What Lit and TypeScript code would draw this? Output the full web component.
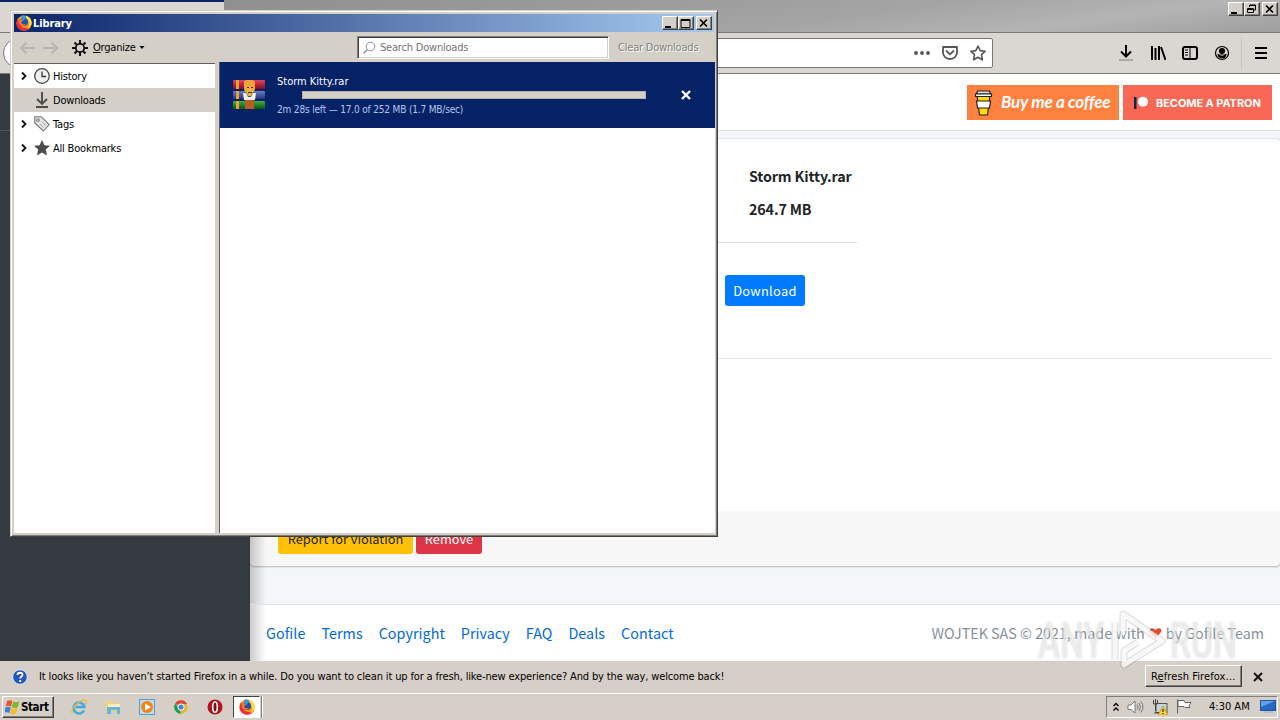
import { LitElement, html, css, svg } from 'lit';
import { customElement } from 'lit/decorators.js';

const shared = css`
    * {
        box-sizing: border-box;
    }

    svg {
        display: block;
        flex: none;
    }

    .ui {
        font-family: "DejaVu Sans Condensed", "DejaVu Sans", sans-serif;
        font-stretch: condensed;
        font-size: 11px;
        letter-spacing: -0.2px;
        line-height: 14px;
        white-space: nowrap;
        color: #000;
    }

    .winbtn {
        width: 16px;
        height: 14px;
        background: #d4d0c8;
        border: 1px solid;
        border-color: #fff #404040 #404040 #fff;
        box-shadow: inset -1px -1px #808080;
    }
`;

const firefox = (size: number) => html`
    <svg width=${size} height=${size} viewBox="0 0 16 16">
        <circle cx="8" cy="8" r="7.600" fill="#ff9500"/>
        <path d="M2 3C-1 8 1 14 6 15.500c4 1 8-.5 9.500-5C13 13 9 14 6.500 12 4 10.500 3 8 4 6z" fill="#f0303c"/>
        <path d="M10 .7c4 1 6.200 4.300 5.600 8.300-.6 3-3 5-5 5 3-2 3-5 2-7-.4-2-3-3-2.600-6.300z" fill="#ffdc3e"/>
        <circle cx="8" cy="7" r="4" fill="#204fb4"/>
        <path d="M5 1c2-1 4.500-.5 5.500 1.500L8 4l1 1-3 1z" fill="#3298e8"/>
        <path d="M2 3l3 2 2 .5-2 2c1 2 3 2 5 1.500C8.500 12 4 11 3 8z" fill="#ff7b16"/>
    </svg>`;

const minimize = svg`<path d="M3 10h6v2H3z"/>`;
const maximize = svg`<path d="M3 3.500h9v8H3zM3 4.500h9" fill="none" stroke="#000"/>`;
const restore = svg`<path d="M5.500 5V3h6v5h-2M5 3.500h7M3.500 6.500h6v4h-6zM3 7.500h7" fill="none" stroke="#000"/>`;
const close = svg`<path d="M4 3.500l7 7M11 3.500l-7 7" fill="none" stroke="#000" stroke-width="1.700"/>`;

const windowButton = (glyph: unknown) => html`
    <div class="winbtn"><svg width="14" height="12" viewBox="1 1 14 12">${glyph}</svg></div>`;

@customElement('library-window')
export class LibraryWindow extends LitElement {
    static styles = [
        shared,
        css`
            :host {
                display: flex;
                flex-direction: column;
                box-sizing: border-box;
                width: 708px;
                height: 527px;
                padding: 2px 2px 3px 3px;
                background: #d4d0c8;
                border: 1px solid;
                border-color: #d4d0c8 #404040 #404040 #d4d0c8;
                box-shadow: inset 1px 1px #fff, inset -1px -1px #808080;
            }

            .title {
                display: flex;
                align-items: center;
                height: 18px;
                margin: 1px 1px 0 0;
                padding: 0 2px;
                background: linear-gradient(to right, #0a246a, #a6caf0);
            }

            .title b {
                flex: 1;
                color: #fff;
                font-family: "DejaVu Sans", sans-serif;
                font-size: 11px;
                letter-spacing: -0.1px;
                padding: 1px 0 0 1px;
            }

            .gap {
                width: 2px;
            }

            .toolbar {
                display: flex;
                align-items: center;
                height: 30px;
                padding: 1px 0 0 5px;
            }

            .gear {
                margin-left: 13px;
            }

            .organize {
                width: 51px;
                padding-left: 5px;
            }

            .search {
                display: flex;
                align-items: center;
                width: 252px;
                height: 23px;
                margin-left: 212px;
                padding-left: 5px;
                gap: 4px;
                color: #757575;
                background: #fff;
                border: 1px solid;
                border-color: #808080 #fff #fff #808080;
                box-shadow: inset 1px 1px #404040, inset -1px -1px #d4d0c8;
            }

            .clear {
                margin-left: 9px;
                color: #808080;
                text-shadow: 1px 1px #fff;
            }

            .panes {
                display: flex;
                flex: 1;
                min-height: 0;
            }

            .tree {
                width: 201px;
                background: #fff;
                border-top: 1px solid #606060;
                margin-top: 1px;
            }

            .row {
                display: flex;
                align-items: center;
                height: 24px;
                padding-left: 6px;
            }

            .row span {
                padding-top: 1px;
            }

            .row svg + svg {
                margin: 0 3px 0 6px;
            }

            .selected {
                background: #d4d0c8;
            }

            .list {
                flex: 1;
                margin-left: 4px;
                background: #fff;
                border-left: 1px solid #606060;
            }

            .item {
                display: flex;
                align-items: center;
                height: 66px;
                padding-left: 13px;
                background: #052266;
            }

            .details {
                width: 369px;
                margin-left: 12px;
                display: flex;
                flex-direction: column;
                padding-top: 1px;
            }

            .details .ui {
                color: #fff;
                letter-spacing: 0;
            }

            .details .status {
                color: #b4c8f0;
                font-size: 10px;
                letter-spacing: -0.17px;
            }

            .bar {
                height: 8px;
                margin: 2px 0 4px 25px;
                border: 1px solid #b5b2ac;
                background: #d4d0c8;
            }

            .cancel {
                margin-left: 35px;
            }
        `
    ];

    twisty = html`<svg width="8" height="10"><path d="M2 1.500l3.500 3.500L2 8.500" fill="none" stroke="#111" stroke-width="1.800"/></svg>`;

    render() {
        return html`
            <div class="title">
                ${firefox(16)}
                <b class="ui">Library</b>
                ${windowButton(minimize)}${windowButton(maximize)}<div class="gap"></div>${windowButton(close)}
            </div>
            <div class="toolbar">
                <svg width="40" height="16" fill="none" stroke="#b9b6b1" stroke-width="2">
                    <path d="M7.500 2.500L2 8l5.500 5.500M2 8h14M32.500 2.500L38 8l-5.500 5.500M38 8H24"/>
                </svg>
                <svg class="gear" width="16" height="16" viewBox="0 0 16 16" fill="none" stroke="#111">
                    <circle cx="8" cy="8" r="4.200" stroke-width="1.800"/>
                    <path d="M8 0v4M8 12v4M0 8h4M12 8h4M2.500 2.500l2.500 2.500M11 11l2.500 2.500M2.500 13.500L5 11M11 5l2.500-2.500" stroke-width="2"/>
                </svg>
                <span class="ui organize"><u>O</u>rganize</span>
                <svg width="6" height="4"><path d="M.5 0h5L3 3z"/></svg>
                <div class="search ui">
                    <svg width="13" height="14" fill="none" stroke="#8d8d98"><circle cx="7.500" cy="5.500" r="4.300"/><path d="M4.500 8.500L.5 12.500" stroke-width="1.500"/></svg>
                    <span>Search Downloads</span>
                </div>
                <span class="ui clear">Clear Downloads</span>
            </div>
            <div class="panes">
                <div class="tree ui">
                    <div class="row">
                        ${this.twisty}
                        <svg width="16" height="16"><circle cx="8" cy="8" r="7.300" fill="#eee" stroke="#444" stroke-width="1.300"/><path d="M8 3.500V8.500h4" fill="none" stroke="#333" stroke-width="1.300"/></svg>
                        <span>History</span>
                    </div>
                    <div class="row selected">
                        <svg width="8" height="10"></svg>
                        <svg width="16" height="16" fill="none" stroke="#4c4c4c" stroke-width="1.900"><path d="M8 0v12M3 7l5 5 5-5M2 15h12"/></svg>
                        <span>Downloads</span>
                    </div>
                    <div class="row">
                        ${this.twisty}
                        <svg width="16" height="16" fill="#e4e4e4" stroke="#777" stroke-width="1.100"><path d="M.8.800h6.500l8 7.700-6 6.500L.8 7z"/><circle cx="4" cy="4" r="1.300" fill="#fff"/><path d="M6 8l3.500 3.500M8 6l3.500 3.500" stroke="#999" stroke-width=".8"/></svg>
                        <span>Tags</span>
                    </div>
                    <div class="row">
                        ${this.twisty}
                        <svg width="16" height="16" fill="#4c4c4c"><path d="M8 0l2.400 5.200 5.600.6-4.200 3.800L13 15.500l-5-3-5 3 1.200-5.900L0 5.800l5.600-.6z"/></svg>
                        <span>All Bookmarks</span>
                    </div>
                </div>
                <div class="list">
                    <div class="item">
                        <svg width="32" height="32" viewBox="0 0 32 32">
                            <defs>
                                <linearGradient id="r" x2="0" y2="1"><stop stop-color="#e4425e"/><stop offset="1" stop-color="#850d25"/></linearGradient>
                                <linearGradient id="b" x2="0" y2="1"><stop stop-color="#667dc6"/><stop offset="1" stop-color="#293276"/></linearGradient>
                                <linearGradient id="g" x2="0" y2="1"><stop stop-color="#3fae42"/><stop offset="1" stop-color="#075515"/></linearGradient>
                            </defs>
                            <rect y="1" width="32" height="9" rx="1" fill="url(#r)"/>
                            <rect y="12" width="32" height="8" rx="1" fill="url(#b)"/>
                            <rect y="22" width="32" height="8" rx="1" fill="url(#g)"/>
                            <path d="M3 1h3v9H3zM3 12h3v8H3zM3 22h3v8H3z" fill="#e9a22d"/>
                            <path d="M12 20h9v10h-9z" fill="#b85d24"/>
                            <path d="M11 2l3-1h6l2 2v7l-1 3h-9l-1-3z" fill="#f3a13b"/>
                            <path d="M10 14h3l2 4h3l2-4h3l-1 7H11z" fill="#f4f0e6"/>
                            <path d="M13 7h7v6l-2 4h-3l-2-4z" fill="#e8b23f"/>
                            <path d="M14 8h2v1h-2zM18 8h2v1h-2zM15 13h4v1h-4z" fill="#54280e"/>
                        </svg>
                        <div class="details">
                            <span class="ui">Storm Kitty.rar</span>
                            <div class="bar"></div>
                            <span class="ui status">2m 28s left — 17.0 of 252 MB (1.7 MB/sec)</span>
                        </div>
                        <svg class="cancel" width="10" height="10"><path d="M1 1l8 8M9 1L1 9" stroke="#fff" stroke-width="2.400"/></svg>
                    </div>
                </div>
            </div>
        `;
    }
}

@customElement('task-bar')
export class TaskBar extends LitElement {
    static styles = [
        shared,
        css`
            :host {
                display: flex;
                align-items: center;
                box-sizing: border-box;
                height: 28px;
                padding: 2px 2px 2px;
                background: #d6cfc7;
                border-top: 1px solid #d6cfc7;
                box-shadow: inset 0 1px #fff;
            }

            .start {
                display: flex;
                align-items: center;
                width: 52px;
                height: 22px;
                padding-left: 2px;
                border: 1px solid;
                border-color: #fff #404040 #404040 #fff;
                box-shadow: inset -1px -1px #808080;
            }

            .start b {
                font-family: "DejaVu Sans", sans-serif;
                font-size: 11.500px;
                letter-spacing: -0.4px;
            }

            .quick {
                display: flex;
                align-items: center;
                gap: 18px;
                margin-left: 17px;
                flex: 1;
            }

            .active {
                display: flex;
                align-items: center;
                width: 27px;
                height: 22px;
                padding-left: 5px;
                margin-left: -8px;
                background: #fff;
                border: 1px solid;
                border-color: #404040 #fff #fff #404040;
                box-shadow: 1px 0 #d6cfc7, 2px 0 #808080, 3px 0 #fff;
            }

            .tray {
                display: flex;
                align-items: center;
                width: 172px;
                height: 22px;
                padding-left: 6px;
                border: 1px solid;
                border-color: #808080 #fff #fff #808080;
            }

            .tray svg + svg {
                margin-left: 8px;
            }

            .time {
                width: 42px;
                margin: 0 9px 0 17px;
                letter-spacing: 0;
            }
        `
    ];

    render() {
        return html`
            <div class="start">
                <svg width="16" height="16">
                    <path d="M2 2c2-1 4-1 5.500 0L6 7.500C4.500 6.500 2.500 6.500.8 7.500z" fill="#e8552a"/>
                    <path d="M8.300 2.500c2 1 4 1 6-.3L12.800 8c-2 1.300-4 1.200-6 0z" fill="#7db928"/>
                    <path d="M.5 8.500c2-1 3.800-1 5.300 0L4.300 14C3 13-.2 13-1 14z" fill="#3d7fe0"/>
                    <path d="M6.500 9c2 1 4 1 6-.3L11 14.500c-2 1.300-4 1.200-6 0z" fill="#f7bc22"/>
                </svg>
                <b class="ui">Start</b>
            </div>
            <div class="quick">
                <svg width="16" height="16" fill="none">
                    <path d="M13 11.500A5.500 5.500 0 1 1 13.500 8H4.500" stroke="#45aae4" stroke-width="2.600"/>
                    <path d="M1.500 14.500C-2 11 10-1 15 1.500c1 .7.500 2.500-.7 4" stroke="#e8b93a" stroke-width="1.300"/>
                </svg>
                <svg width="16" height="16">
                    <path d="M1 2h5l1 2h7v9H1z" fill="#f0d577"/>
                    <path d="M3 5h12v3H3z" fill="#fbf1b8"/>
                    <path d="M2 8h13v7h-3v-4H6v4H2z" fill="#64b4e4"/>
                </svg>
                <svg width="16" height="16">
                    <rect x=".5" y=".5" width="15" height="15" fill="#b8dcf5" stroke="#5a9cd0"/>
                    <circle cx="8" cy="8" r="6" fill="#f58412"/><path d="M6 4.500v7L12 8z" fill="#fff"/>
                </svg>
                <svg width="16" height="16" viewBox="0 0 16 16">
                    <circle cx="8" cy="8" r="6.700" fill="#e2b92c"/>
                    <path d="M8 8L2.200 4.500A6.700 6.700 0 0 1 14 5H8z" fill="#db4437"/>
                    <path d="M2.200 4.500l4 5.500 1.800 4.700A6.700 6.700 0 0 1 2.200 4.500z" fill="#169b5b"/>
                    <circle cx="8" cy="8" r="3.500" fill="#fff"/><circle cx="8" cy="8" r="2.600" fill="#4387ed"/>
                </svg>
                <svg width="16" height="16">
                    <circle cx="8" cy="8" r="7.500" fill="#b5121b"/><ellipse cx="8" cy="8" rx="2.300" ry="5.300" fill="#801010" stroke="#fff" stroke-width="1.600"/>
                </svg>
                <div class="active">${firefox(16)}</div>
            </div>
            <div class="tray">
                <svg width="6" height="10" fill="none" stroke="#000" stroke-width="1.300"><path d="M.5 4L3 1.500 5.500 4M.5 8.500L3 6l2.500 2.500"/></svg>
                <svg width="17" height="14" fill="#fff" stroke="#777"><path d="M1 5h3l4-4v12L4 9.500H1z"/><path d="M10 4.500q2 2.500 0 5M12 3q3 4 0 8M14 1.500q4 5.500 0 11" fill="none"/></svg>
                <svg width="16" height="16">
                    <rect x="4" y="4.500" width="11" height="9" fill="#c8d2dc" stroke="#555"/>
                    <path d="M1.500 1v4h4V1M3.500 0v12M2 14h5" fill="none" stroke="#444"/>
                    <path d="M11 7l5 9H6z" fill="#ffd42a" stroke="#a88400" stroke-width=".6"/><path d="M10.500 10h1v3h-1zM10.500 14h1v1h-1z"/>
                </svg>
                <svg width="16" height="15" fill="#fff" stroke="#666"><path d="M1.500.5v14M2 1.500h6l1 2h6l-2 3 1 2H9l-1-1H2z"/></svg>
                <span class="ui time">4:30 AM</span>
                <svg width="16" height="13"><rect x=".5" y=".5" width="15" height="10" fill="#2969c4" stroke="#24539c"/><path d="M1 1h14L1 7z" fill="#5fa1ea"/><path d="M4 12h9" stroke="#8eb3d8"/></svg>
            </div>
        `;
    }
}

@customElement('app-root')
export class AppRoot extends LitElement {
    static styles = [
        shared,
        css`
            :host {
                display: flex;
                flex-direction: column;
                position: relative;
                width: 1280px;
                height: 720px;
                overflow: hidden;
                background: #d6cfc7;
            }

            .tabs {
                display: flex;
                height: 32px;
                background: linear-gradient(172deg, #888 0%, #a5a5a5 65%, #b4b4b4 82%, #9e9e9e 100%);
            }

            .tab {
                width: 224px;
                background: #dad7d2;
                border-top: 2px solid #0a246a;
            }

            .controls {
                display: flex;
                margin: 2px 2px 0 auto;
            }

            .controls .winbtn:last-child {
                margin-left: 2px;
            }

            .nav {
                display: flex;
                align-items: center;
                height: 42px;
                border: 1px solid #7a7975;
                border-width: 1px 0;
                background: #dad7d3;
            }

            .url {
                display: flex;
                align-items: center;
                justify-content: flex-end;
                width: 990px;
                height: 30px;
                margin-left: 3px;
                padding-right: 6px;
                gap: 12px;
                background: #fff;
                border: 1px solid #777;
                border-radius: 15px 2px 2px 15px;
            }

            .tools {
                display: flex;
                align-items: center;
                gap: 16px;
                margin-left: 125px;
            }

            .sep {
                width: 1px;
                height: 32px;
                margin: 0 -5px 0 -5px;
                background: #c6c3bf;
            }

            .page {
                display: flex;
                height: 587px;
                font-family: "Noto Sans CJK SC", "Noto Sans CJK JP", sans-serif;
                font-size: 14.300px;
                line-height: 24px;
                color: #212529;
                white-space: nowrap;
            }

            .sidebar {
                width: 250px;
                background: #353a41;
            }

            .brand {
                height: 57px;
                border-bottom: 1px solid #4b545c;
            }

            .main {
                width: 1030px;
                display: flex;
                flex-direction: column;
                background: linear-gradient(to right, #0003, #0000 16px), #f4f6f9;
            }

            .header {
                display: flex;
                justify-content: flex-end;
                gap: 4px;
                height: 57px;
                padding: 11px 8px 0;
                background: #fff;
                border-bottom: 1px solid #dee2e6;
            }

            .coffee {
                display: flex;
                align-items: center;
                width: 152px;
                height: 35px;
                padding-left: 7px;
                gap: 8px;
                color: #fff;
                background: #ff813f;
                font: italic 700 17px Lato, sans-serif;
                letter-spacing: -0.25px;
            }

            .coffee span {
                padding-bottom: 2px;
            }

            .patron {
                display: flex;
                align-items: center;
                width: 149px;
                height: 35px;
                padding-left: 11px;
                gap: 8px;
                color: #fff;
                background: #f96854;
                font: 700 11px Inter, sans-serif;
                letter-spacing: -0.07px;
            }

            .card {
                display: flex;
                flex-direction: column;
                height: 428px;
                margin-top: 7px;
                background: linear-gradient(to right, #0003, #0000 16px), #fff;
                border-top: 1px solid #e3e4e8;
                border-radius: 4px;
                box-shadow: 0 1px 2px #0004;
            }

            .facts {
                width: 607px;
                height: 104px;
                padding: 25px 0 0 499px;
                border-bottom: 1px solid #dfdfdf;
                font-weight: 700;
                letter-spacing: -0.14px;
            }

            .facts div {
                height: 33px;
            }

            .action {
                height: 116px;
                margin-right: 8px;
                padding: 32px 0 0 475px;
                border-bottom: 1px solid #e5e5e5;
            }

            .btn {
                display: inline-block;
                height: 31px;
                padding: 0 8px;
                border-radius: 3px;
                line-height: 31px;
                font-size: 12.800px;
                text-align: center;
            }

            .download {
                width: 80px;
                color: #fff;
                background: #007bff;
                letter-spacing: 0.35px;
            }

            .cardfoot {
                display: flex;
                gap: 3px;
                margin-top: auto;
                height: 55px;
                padding: 12px 28px;
                background: #00000008;
            }

            .report {
                width: 135px;
                background: #ffc107;
            }

            .remove {
                width: 66px;
                color: #fff;
                background: #dc3545;
            }

            .footer {
                display: flex;
                gap: 16px;
                margin-top: auto;
                height: 57px;
                padding: 16px;
                color: #0069d9;
                background: linear-gradient(to right, #0003, #0000 16px), #fff;
                border-top: 1px solid #dee2e6;
            }

            .link {
                letter-spacing: 0.06px;
            }

            .credit {
                display: flex;
                gap: 4px;
                margin-left: auto;
                color: #869099;
            }

            .heart {
                margin-top: 6px;
            }

            .notice {
                display: flex;
                align-items: center;
                height: 31px;
                padding: 1px 16px 0 12px;
            }

            .notice .message {
                flex: 1;
                padding-left: 11px;
                letter-spacing: -0.14px;
            }

            .refresh {
                position: relative;
                z-index: 2;
                width: 97px;
                height: 22px;
                margin: -2px 10px 0 0;
                padding: 4px 0 0 5px;
                background: #d6cfc7;
                border: 1px solid;
                border-color: #fff #404040 #404040 #fff;
                box-shadow: inset -1px -1px #808080;
                letter-spacing: 0.1px;
            }

            library-window {
                position: absolute;
                left: 10px;
                top: 10px;
            }

            .watermark {
                position: absolute;
                left: 1038px;
                top: 607px;
                display: flex;
                height: 66px;
            }

            .mark {
                width: 68px;
                color: #fff9;
                font: 500 50px/68px Roboto, sans-serif;
                text-shadow: 0 0 2px #0003;
                transform: scaleX(0.67);
                transform-origin: 0 0;
            }
        `
    ];

    links = ['Gofile', 'Terms', 'Copyright', 'Privacy', 'FAQ', 'Deals', 'Contact'];

    render() {
        return html`
            <div class="tabs">
                <div class="tab"></div>
                <div class="controls">${windowButton(minimize)}${windowButton(restore)}${windowButton(close)}</div>
            </div>
            <div class="nav">
                <div class="url">
                    <svg width="16" height="16" fill="#555"><circle cx="2" cy="8" r="1.900"/><circle cx="8" cy="8" r="1.900"/><circle cx="14" cy="8" r="1.900"/></svg>
                    <svg width="16" height="16" fill="none" stroke="#555" stroke-width="1.800"><path d="M1 2h14v5.500a7 6.500 0 0 1-14 0z" stroke-linejoin="round"/><path d="M4.500 6L8 9.300 11.500 6" stroke-linecap="round"/></svg>
                    <svg width="16" height="16" fill="none" stroke="#555" stroke-width="1.600" stroke-linejoin="round"><path d="M8 1l2.200 4.600 5 .6-3.700 3.400.9 5.100L8 12.300l-4.400 2.400.9-5.100L.8 6.200l5-.6z"/></svg>
                </div>
                <div class="tools">
                    <svg width="16" height="16" fill="none" stroke="#000" stroke-width="2"><path d="M8 0v11M3 6.500l5 5 5-5"/><path d="M1 15h14" stroke="#aaa"/></svg>
                    <svg width="16" height="16" fill="none" stroke="#000" stroke-width="2"><path d="M2 1v14M5.500 3v12M9 1v14M11 2l4.500 13"/></svg>
                    <svg width="16" height="16" fill="none" stroke="#000" stroke-width="2"><rect x="1" y="2" width="14" height="12" rx="2"/><path d="M8 2v12M3 5h3M3 7.500h3M3 10h3" stroke-width="1"/></svg>
                    <svg width="16" height="16"><circle cx="8" cy="8" r="6.500" fill="none" stroke="#000" stroke-width="1.200"/><circle cx="8" cy="6" r="3"/><path d="M3.500 9h9c0 3-2 4.500-4.500 4.500S3.500 12 3.500 9z"/><path d="M5.500 9.500q2.500 1.500 5 0" stroke="#ddd" fill="none"/></svg>
                    <div class="sep"></div>
                    <svg width="16" height="16"><path d="M2 3h12M2 8h12M2 13h12" stroke="#000" stroke-width="2"/></svg>
                </div>
            </div>
            <div class="page">
                <div class="sidebar"><div class="brand"></div></div>
                <div class="main">
                    <div class="header">
                        <div class="coffee">
                            <svg width="19" height="26" stroke="#222" stroke-width="1.200">
                                <path d="M3 5h13l-2.500 20h-8z" fill="#ffdd00"/><path d="M3.500 1h12l1 3h-14z" fill="#d8e5dd"/><path d="M1.500 4h16v2.500h-16z" fill="#fff"/><path d="M2.500 11h14l-1 7h-12z" fill="#fff"/>
                            </svg>
                            <span>Buy me a coffee</span>
                        </div>
                        <div class="patron">
                            <svg width="14" height="14"><path d="M0 1h2.500v12H0z" fill="#052d49"/><circle cx="9" cy="5.800" r="5" fill="#fff"/></svg>
                            <span>BECOME A PATRON</span>
                        </div>
                    </div>
                    <div class="card">
                        <div class="facts"><div>Storm Kitty.rar</div><div>264.7 MB</div></div>
                        <div class="action"><span class="btn download">Download</span></div>
                        <div class="cardfoot"><span class="btn report">Report for violation</span><span class="btn remove">Remove</span></div>
                    </div>
                    <div class="footer">
                        ${this.links.map(link => html`<span class="link">${link}</span>`)}
                        <div class="credit">
                            <span>WOJTEK SAS © 2021, made with</span>
                            <svg class="heart" width="13" height="12"><path d="M6.500 11L.8 5C-.5 2 3-.5 6.500 3 10-.5 13.500 2 12.200 5z" fill="#e2492f"/><path d="M3 3l6 5" stroke="#f38b72"/></svg>
                            <span>by Gofile Team</span>
                        </div>
                    </div>
                </div>
            </div>
            <div class="notice ui">
                <svg width="16" height="16"><circle cx="8" cy="8" r="7.300" fill="#2856bd" stroke="#dfe5f2"/><path d="M5.500 6C5.500 3 10.500 3 10.500 6c0 1.500-2.300 1.500-2.300 3.500M8.200 11v2" fill="none" stroke="#fff" stroke-width="1.800"/></svg>
                <span class="message">It looks like you haven’t started Firefox in a while. Do you want to clean it up for a fresh, like-new experience? And by the way, welcome back!</span>
                <div class="refresh">R<u>e</u>fresh Firefox…</div>
                <svg width="12" height="12"><path d="M2 2l8 8M10 2l-8 8" stroke="#111" stroke-width="2"/></svg>
            </div>
            <task-bar></task-bar>
            <library-window></library-window>
            <div class="watermark">
                <span class="mark">ANY</span>
                <svg width="64" height="66" fill="none" stroke-linejoin="round">
                    <path d="M17 28V7l39 27-38 24V44L32 35M9 15v38" stroke="#0002" stroke-width="7"/>
                    <path d="M17 28V7l39 27-38 24V44L32 35M9 15v38" stroke="#fffc" stroke-width="5"/>
                </svg>
                <span class="mark">RUN</span>
            </div>
        `;
    }
}
